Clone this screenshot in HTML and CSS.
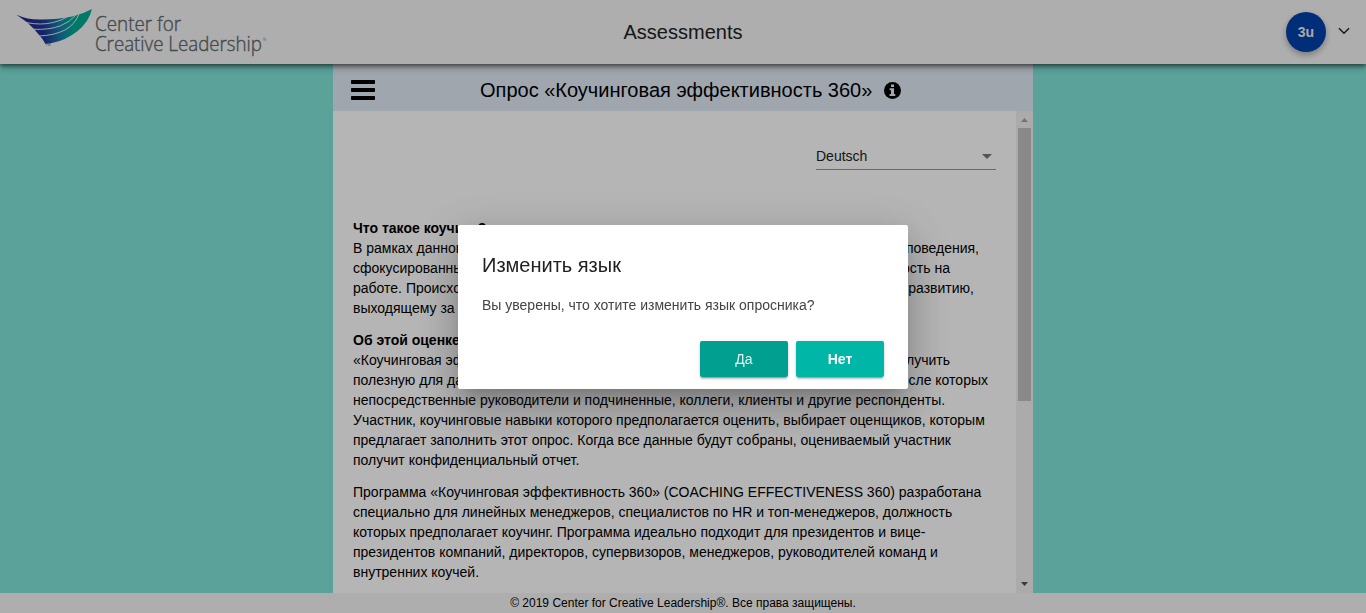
FILE: index.html
```html
<!DOCTYPE html>
<html lang="ru">
<head>
<meta charset="utf-8">
<title>Assessments</title>
<link rel="stylesheet" href="styles.css">
</head>
<body>
<div class="app">
  <header class="topbar">
    <svg class="logo" viewBox="0 0 280 64" width="280" height="64">
      <defs>
        <linearGradient id="wing" gradientUnits="userSpaceOnUse" x1="17" y1="28" x2="90" y2="18">
          <stop offset="0" stop-color="#24247f"/>
          <stop offset=".35" stop-color="#1f3594"/>
          <stop offset=".58" stop-color="#1780ac"/>
          <stop offset=".75" stop-color="#00a896"/>
          <stop offset="1" stop-color="#00ad91"/>
        </linearGradient>
      </defs>
      <path fill="url(#wing)" d="M16.500 14.700Q28 20 42 19.500Q58 19.500 72 16.500Q83 14 92 9Q89 22 77 31.500Q66 40 54 42.500Q49 43.600 45.500 44Q43 39 39.500 35.500L34 29L27 22.200Z"/>
      <g class="logo-cuts"><path d="M26 22.500Q41 25.500 53 22.500Q62 20.500 67 17"/><path d="M33 29.300Q49 30 60 26Q70 22 76 15"/><path d="M39 36Q54 35.500 65 30Q75 24.500 79 14"/></g>
      <text class="logo-tm" x="45" y="46">TM</text>
      <text class="logo-name" x="95" y="30.500" textLength="86" lengthAdjust="spacingAndGlyphs">Center for</text>
      <text class="logo-name" x="95" y="50.500" textLength="167" lengthAdjust="spacingAndGlyphs">Creative Leadership</text>
      <text class="logo-tm" x="263" y="41">®</text>
    </svg>
    <h1 class="topbar-title">Assessments</h1>
    <div class="account">
      <span class="avatar">3u</span>
      <svg class="chevron" width="12" height="8" viewBox="0 0 12 8"><path d="M1 1.200L6 6.200L11 1.200"/></svg>
    </div>
  </header>
  <main class="stage">
    <section class="panel">
      <div class="panel-head">
        <svg class="burger" width="24" height="20" viewBox="0 0 24 20"><rect width="24" height="4" rx=".7"/><rect y="8" width="24" height="4" rx=".7"/><rect y="16" width="24" height="4" rx=".7"/></svg>
        <h2 class="panel-title">Опрос «Коучинговая эффективность 360»</h2>
        <svg class="info" width="17" height="17" viewBox="0 0 17 17"><circle cx="8.500" cy="8.500" r="8.500"/><path d="M7 2.600h3v2.400H7zM5.600 6.300H10v5.600h1.300v2H5.600v-2H7V8.300H5.600z"/></svg>
      </div>
      <div class="panel-body">
        <div class="content">
          <div class="language"><span>Deutsch</span><svg width="10" height="5" viewBox="0 0 10 5"><path d="M0 0h10L5 5z"/></svg></div>
          <div class="copy">
            <div class="para">
              <b>Что такое коучинг?</b>
              <div class="line w626"><span>В рамках данного</span><span>поведения,</span></div>
              <div class="line w597"><span>сфокусированных</span><span>эффективность на</span></div>
              <div class="line w621"><span>работе. Происходит</span><span>развитию,</span></div>
              <div class="line"><span>выходящему за</span></div>
            </div>
            <div class="para">
              <b>Об этой оценке</b>
              <div class="line w597"><span>«Коучинговая эффективность</span><span>получить</span></div>
              <div class="line w635"><span>полезную для даль</span><span>после которых</span></div>
              непосредственные руководители и подчиненные, коллеги, клиенты и другие респонденты.<br>
              Участник, коучинговые навыки которого предполагается оценить, выбирает оценщиков, которым<br>
              предлагает заполнить этот опрос. Когда все данные будут собраны, оцениваемый участник<br>
              получит конфиденциальный отчет.
            </div>
            <div class="para">
              Программа «Коучинговая эффективность 360» (COACHING EFFECTIVENESS 360) разработана<br>
              специально для линейных менеджеров, специалистов по HR и топ-менеджеров, должность<br>
              которых предполагает коучинг. Программа идеально подходит для президентов и вице-<br>
              президентов компаний, директоров, супервизоров, менеджеров, руководителей команд и<br>
              внутренних коучей.
            </div>
          </div>
        </div>
        <div class="scrollbar">
          <svg width="17" height="17" viewBox="0 0 17 17"><path class="arrow-off" d="M5 11L8.500 7L12 11z"/></svg>
          <div class="thumb"></div>
          <svg width="17" height="17" viewBox="0 0 17 17"><path class="arrow-on" d="M5 6L8.500 10L12 6z"/></svg>
        </div>
      </div>
    </section>
  </main>
  <footer class="footer">© 2019 Center for Creative Leadership®. Все права защищены.</footer>
</div>
<div class="backdrop">
  <div class="dialog">
    <h2 class="dialog-title">Изменить язык</h2>
    <p class="dialog-text">Вы уверены, что хотите изменить язык опросника?</p>
    <div class="actions"><button class="btn btn-focus">Да</button><button class="btn">Нет</button></div>
  </div>
</div>
</body>
</html>
```
FILE: styles.css
```css
* { box-sizing: border-box; }
body { margin: 0; font: 14px/20px "Liberation Sans", Arial, sans-serif; color: #000; overflow: hidden; }
h1, h2, p { margin: 0; font-weight: 400; }
svg { display: block; flex: none; }
.app { display: flex; flex-direction: column; height: 613px; background: #81e5db; }
.topbar { position: relative; z-index: 1; flex: none; height: 64px; display: grid; grid-template-columns: 1fr auto 1fr; align-items: center; background: #f6f6f6; box-shadow: 0 2px 4px rgba(0,0,0,.5), 0 4px 8px rgba(0,0,0,.2); }
.logo-name { font: 300 21px "Open Sans", sans-serif; fill: #5f686e; stroke: #5f686e; stroke-width: .4; }
.logo-tm { font: 4px "Open Sans", sans-serif; fill: #646d73; }
.logo-cuts { fill: none; stroke: #f6f6f6; stroke-width: .9; }
.topbar-title { font-size: 20px; color: #222; }
.account { display: flex; justify-content: flex-end; align-items: center; gap: 12px; padding-right: 16px; }
.avatar { width: 40px; height: 40px; border-radius: 50%; background: #0042ab; color: #eee; font-size: 14px; font-weight: 700; line-height: 40px; text-align: center; box-shadow: 0 3px 6px rgba(0,0,0,.3); }
.chevron { margin-bottom: 3px; fill: none; stroke: #222; stroke-width: 1.5; }
.stage { flex: 1; min-height: 0; display: flex; justify-content: center; }
.panel { width: 700px; display: flex; flex-direction: column; background: #fff; }
.panel-head { flex: none; height: 47px; display: flex; align-items: center; padding: 5px 18px 0; background: #e1eaf6; }
.panel-title { font-size: 20px; margin-left: 105px; white-space: nowrap; }
.info { margin-left: 12px; }
.info path { fill: #e1eaf6; }
.panel-body { flex: 1; min-height: 0; display: flex; }
.content { flex: 1; padding: 35px 20px 0; overflow: hidden; }
.language { width: 180px; height: 24px; margin-left: auto; display: flex; justify-content: space-between; padding-right: 4px; border-bottom: 1px solid #949494; color: #222; }
.language svg { margin-top: 8px; fill: #777; }
.copy { padding-top: 48px; white-space: nowrap; }
.para { margin-bottom: 12px; }
.line { display: flex; justify-content: space-between; }
.w597 { width: 597px; }
.w621 { width: 621px; }
.w626 { width: 626px; }
.w635 { width: 635px; }
.scrollbar { width: 17px; display: flex; flex-direction: column; background: #f1f1f1; }
.thumb { width: 13px; height: 273px; margin: 0 2px auto; background: #c1c1c1; }
.arrow-off { fill: #a3a3a3; }
.arrow-on { fill: #505050; }
.footer { flex: none; height: 20px; background: #f6f6f6; font-size: 12px; line-height: 20px; text-align: center; }
.backdrop { position: fixed; inset: 0; z-index: 2; display: flex; justify-content: center; align-items: center; background: rgba(0,0,0,.29); }
.dialog { width: 450px; height: 164px; margin-top: 1px; padding: 24px; border-radius: 2px; background: #fff; box-shadow: 0 11px 15px -7px rgba(0,0,0,.2), 0 24px 38px 3px rgba(0,0,0,.14), 0 9px 46px 8px rgba(0,0,0,.12); }
.dialog-title { font-size: 20px; line-height: 32px; color: #212121; }
.dialog-text { margin-top: 14px; color: #444; }
.actions { display: flex; justify-content: flex-end; gap: 8px; margin-top: 26px; }
.btn { width: 88px; height: 36px; border: 0; border-radius: 2px; background: #00b7a7; color: #fff; font: 700 14px "Liberation Sans", Arial, sans-serif; box-shadow: 0 3px 1px -2px rgba(0,0,0,.2), 0 2px 2px rgba(0,0,0,.14), 0 1px 5px rgba(0,0,0,.12); }
.btn-focus { background: #009f90; color: #dff3f1; font-weight: 400; }
```
